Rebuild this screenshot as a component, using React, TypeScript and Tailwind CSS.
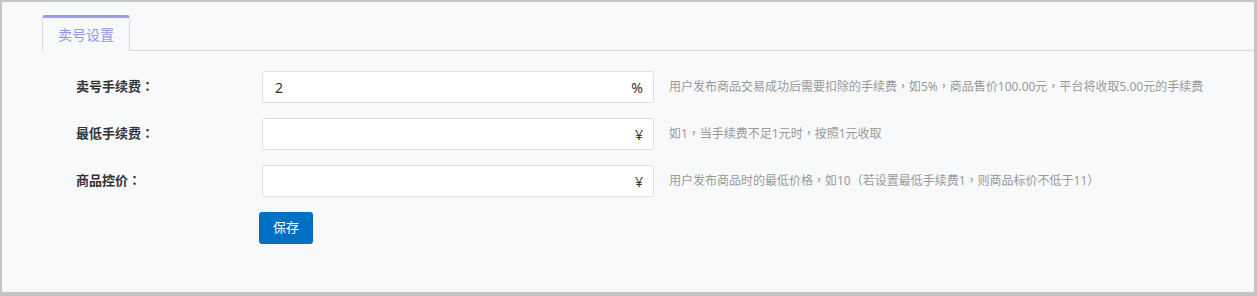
import React from 'react';

const font = { fontFamily: '"Noto Sans", "Noto Sans CJK TC", sans-serif' };

interface RowProps {
  label: string;
  value: string;
  suffix: string;
  hint: string;
}

function FormRow({ label, value, suffix, hint }: RowProps) {
  return (
    <div className="flex items-center h-[32px]">
      <label className="w-[186px] shrink-0 text-[13px] font-bold text-[#333]">{label}</label>
      <div className="relative w-[392px] h-[32px] shrink-0">
        <input
          type="text"
          defaultValue={value}
          className="w-full h-full bg-white border border-[#dcdfe6] rounded-[3px] pl-[12px] pr-[30px] text-[14px] text-[#333] outline-none"
          style={font}
        />
        <span className="absolute right-[11px] top-0 h-full flex items-center text-[14px] text-[#333]">{suffix}</span>
      </div>
      <span className="ml-[15px] text-[12px] text-[#999]">{hint}</span>
    </div>
  );
}

export default function App() {
  return (
    <div
      className="w-[1257px] h-[296px] bg-[#f8f9fb] border-t-2 border-l-2 border-r-[3px] border-b-[4px] border-[#c4c4c4] overflow-hidden"
      style={font}
    >
      <div className="flex items-end pt-[13px] h-[49px]">
        <div className="w-[40px] shrink-0" />
        <div className="w-[88px] h-[36px] border-x border-[#d9d9d9] rounded-t-[3px] border-t-[3px] border-t-[#9a9af2] flex items-center justify-center text-[14px] text-[#9595ef] bg-[#f8f9fb]">
          卖号设置
        </div>
        <div className="flex-1 border-b border-[#d9d9d9]" />
      </div>
      <div className="pl-[74px] pt-[20px] flex flex-col gap-[15px]">
        <FormRow
          label="卖号手续费："
          value="2"
          suffix="%"
          hint="用户发布商品交易成功后需要扣除的手续费，如5%，商品售价100.00元，平台将收取5.00元的手续费"
        />
        <FormRow label="最低手续费：" value="" suffix="¥" hint="如1，当手续费不足1元时，按照1元收取" />
        <FormRow
          label="商品控价："
          value=""
          suffix="¥"
          hint="用户发布商品时的最低价格，如10（若设置最低手续费1，则商品标价不低于11）"
        />
        <div className="pl-[183px]">
          <button className="w-[54px] h-[32px] bg-[#0070c4] rounded-[3px] text-white text-[13px]">保存</button>
        </div>
      </div>
    </div>
  );
}
